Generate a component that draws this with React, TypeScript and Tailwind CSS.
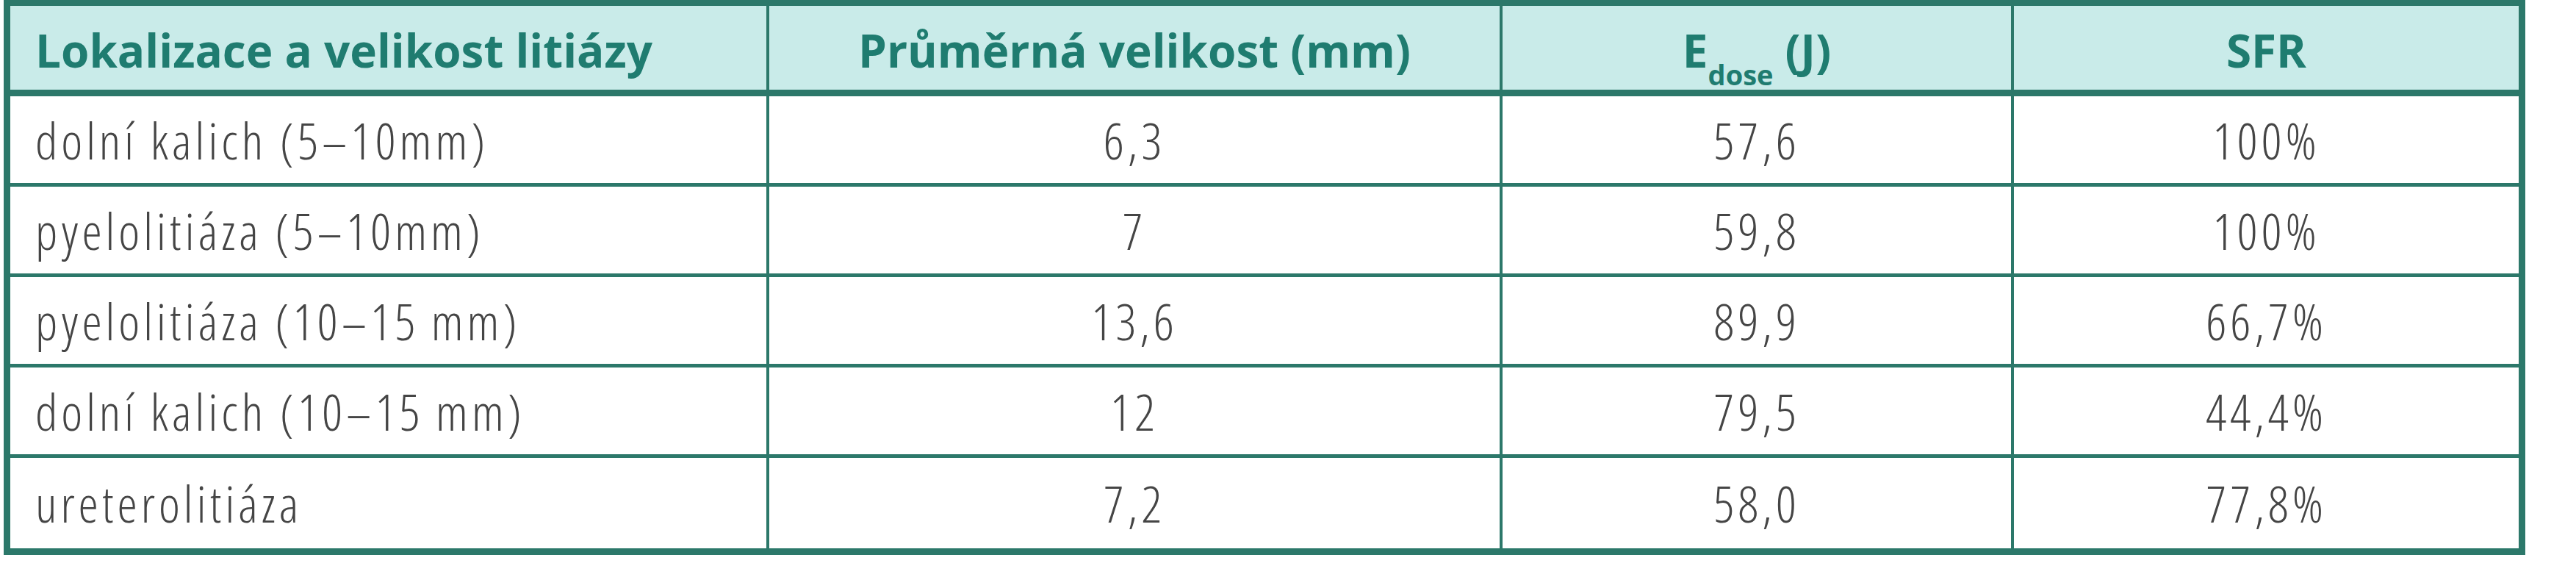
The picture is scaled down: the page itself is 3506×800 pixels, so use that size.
const rows = [
  { place: 'dolní kalich (5–10mm)', size: '6,3', dose: '57,6', sfr: '100%' },
  { place: 'pyelolitiáza (5–10mm)', size: '7', dose: '59,8', sfr: '100%' },
  { place: 'pyelolitiáza (10–15\u2009mm)', size: '13,6', dose: '89,9', sfr: '66,7%' },
  { place: 'dolní kalich (10–15\u2009mm)', size: '12', dose: '79,5', sfr: '44,4%' },
  { place: 'ureterolitiáza', size: '7,2', dose: '58,0', sfr: '77,8%' },
];

const head = 'flex items-center pt-[5px] h-[123px] border-b-[9px] border-[#2c786a] font-bold text-[62px] leading-none text-[#1f7c70]';
const cell = 'flex items-center h-[123px] border-[#2c786a] text-[69px] leading-none font-light tracking-[5px] text-[#454545] font-stretch-condensed';

export default function App() {
  return (
    <main className="h-[800px] w-[3506px] bg-white pl-[5px] font-['Open_Sans',sans-serif]">
      <div className="w-[3432px] border-[9px] border-t-[8px] border-[#2c786a] bg-white">
        <div className="grid grid-cols-[1033px_998px_696px_687px] bg-[#c9ebe9]">
          <div className={`${head} border-r-4 pl-[34px]`}>Lokalizace a velikost litiázy</div>
          <div className={`${head} border-r-4 justify-center`}>Průměrná velikost (mm)</div>
          <div className={`${head} border-r-4 justify-center`}>
            <span>
              E<sub className="-bottom-[24px] text-[38px]">dose</sub> (J)
            </span>
          </div>
          <div className={`${head} justify-center`}>SFR</div>
        </div>

        <div className="grid grid-cols-[1033px_998px_696px_687px]">
          {rows.map((r, i) => {
            const last = i === rows.length - 1;
            const b = last ? 'h-[114px]' : 'border-b-[5px]';
            return [
              <div key={`${i}a`} className={`${cell} ${b} border-r-4 pl-[34px]`}>{r.place}</div>,
              <div key={`${i}b`} className={`${cell} ${b} border-r-4 justify-center`}>{r.size}</div>,
              <div key={`${i}c`} className={`${cell} ${b} border-r-4 justify-center`}>{r.dose}</div>,
              <div key={`${i}d`} className={`${cell} ${b} justify-center`}>{r.sfr}</div>,
            ];
          })}
        </div>
      </div>
    </main>
  );
}
